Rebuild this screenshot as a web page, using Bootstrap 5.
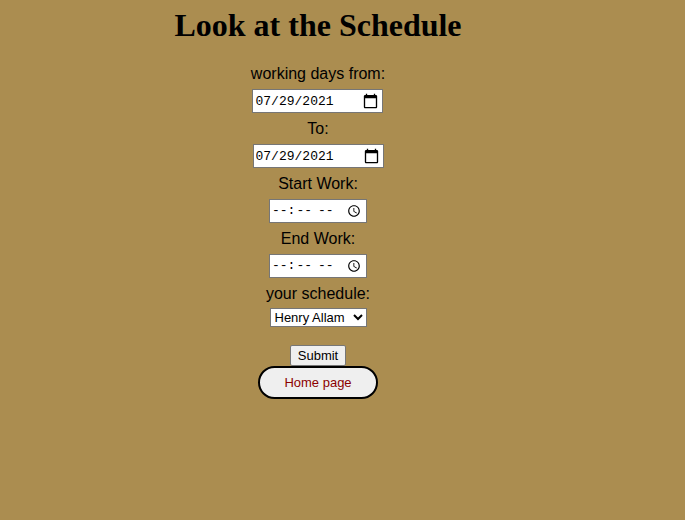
<!DOCTYPE html>
<html lang="en">
<head>
<meta charset="utf-8">
<meta name="viewport" content="width=device-width, initial-scale=1">
<title>Look at the Schedule</title>
<link rel="stylesheet" href="https://cdn.jsdelivr.net/npm/bootstrap@5.3.0/dist/css/bootstrap.min.css">
<style>
  body { background: #ab8d50; color: #000; font-family: Arial, "Liberation Sans", sans-serif; font-size: 16px; line-height: 24px; }
  .schedule { padding: 6px 49px 24px 0; }
  .schedule h1 { font: bold 32px/38px "Times New Roman", "Liberation Serif", serif; margin-bottom: 18px; }
  .entry { gap: 3px; margin-bottom: 4px; }
  .field { height: 24px; padding: 1px 2px; border: 1px solid #767676; background: #fff; color: #000; font: 13px "Liberation Mono", monospace; }
  .field-date { width: 131px; }
  .field-date::-webkit-calendar-picker-indicator { width: 17px; height: 17px; padding: 0; margin-right: 1px; background-size: contain; }
  .field-time { width: 98px; }
  .entry-pick { gap: 2px; }
  .worker { width: 97px; height: 19px; padding: 0; border: 1px solid #767676; background: #fff; color: #000; font-size: 13px; line-height: 16px; }
  .send { height: 21px; padding: 0 7px; margin-top: 14px; border: 1px solid #767676; border-radius: 2px; background: #efefef; color: #000; font-size: 13px; line-height: 19px; }
  .home { padding: 4px 24px; border: 2px solid #000; border-radius: 17px; background: #efefef; color: #8b0000; font-size: 13px; line-height: 21px; }
</style>
</head>
<body>
<main class="schedule text-center">
  <h1>Look at the Schedule</h1>
  <form class="d-flex flex-column align-items-center">
    <div class="entry d-flex flex-column align-items-center">
      <label for="from">working days from:</label>
      <input class="field field-date" type="date" id="from" value="2021-07-29">
    </div>
    <div class="entry d-flex flex-column align-items-center">
      <label for="to">To:</label>
      <input class="field field-date" type="date" id="to" value="2021-07-29">
    </div>
    <div class="entry d-flex flex-column align-items-center">
      <label for="start">Start Work:</label>
      <input class="field field-time" type="time" id="start">
    </div>
    <div class="entry d-flex flex-column align-items-center">
      <label for="end">End Work:</label>
      <input class="field field-time" type="time" id="end">
    </div>
    <div class="entry entry-pick d-flex flex-column align-items-center">
      <label for="worker">your schedule:</label>
      <select class="worker" id="worker"><option>Henry Allam</option></select>
    </div>
    <button class="send" type="submit">Submit</button>
    <button class="home" type="button">Home page</button>
  </form>
</main>
<script src="https://cdn.jsdelivr.net/npm/bootstrap@5.3.0/dist/js/bootstrap.bundle.min.js"></script>
</body>
</html>
